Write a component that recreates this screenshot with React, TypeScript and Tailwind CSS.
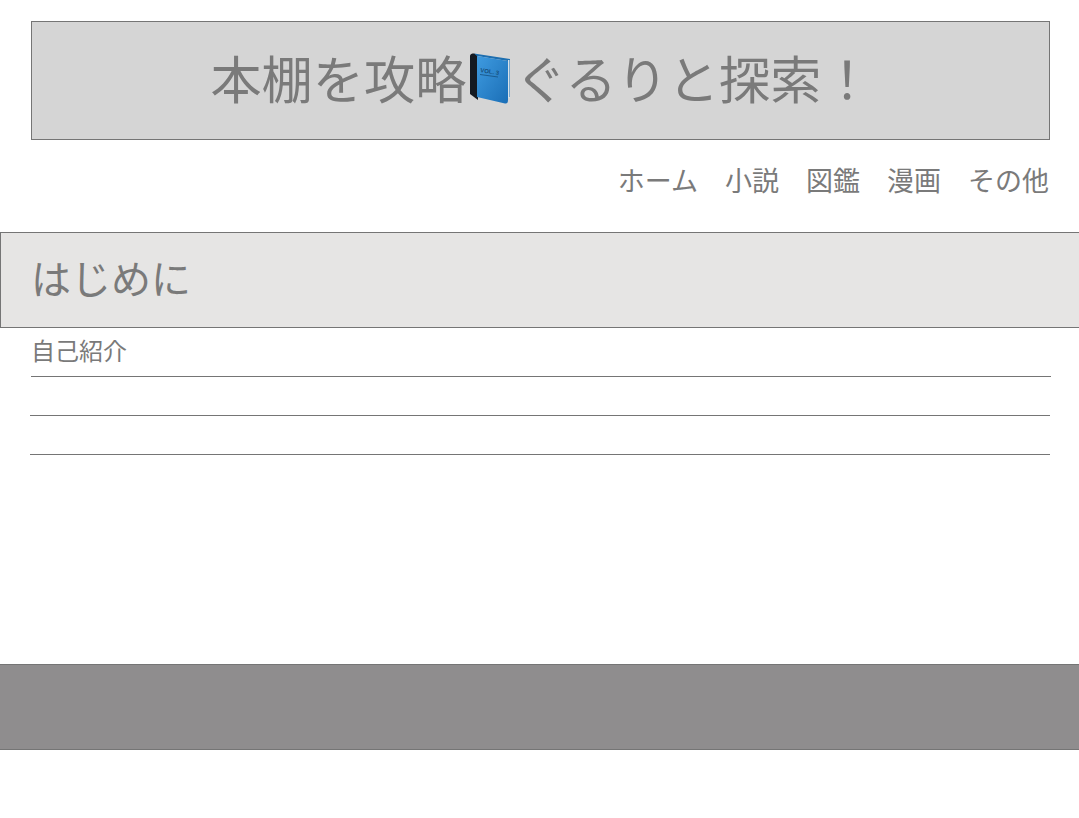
const jp = { fontFamily: '"Noto Sans CJK JP", "Noto Sans", sans-serif' };

function BookIcon() {
  return (
    <svg viewBox="0 0 51 52" className="inline-block w-[51px] h-[52px] shrink-0 relative top-[1px] left-[2px]">
      <defs>
        <linearGradient id="cover" x1="0" y1="0" x2="1" y2="1">
          <stop offset="0" stopColor="#3f9be0" />
          <stop offset="1" stopColor="#1a6eb6" />
        </linearGradient>
      </defs>
      <g transform="translate(3 0)">
        <path d="M1 3 C1 1 3 0.5 5 0.5 L9 2 L9 47 L1 41 Z" fill="#141a22" />
        <path d="M5 0.5 L41 6 L41 44 L39 44 L39 8 L8 3 Z" fill="#1e6fb0" />
        <path d="M39 7 L40.5 7 L40.5 45 L39 45 Z" fill="#d9e2e8" />
        <path d="M8 3 L39 8 L39 47 Q39 51 36 50.5 L8 44 Z" fill="url(#cover)" />
        <text
          x="11"
          y="19"
          transform="rotate(9 11 19)"
          fontFamily='"Liberation Sans", sans-serif'
          fontSize="6"
          fontWeight="700"
          fill="#17507f"
        >
          VOL. 3
        </text>
        <path d="M11 21.5 L29 24" stroke="#1b5c90" strokeWidth="1" />
      </g>
    </svg>
  );
}

export default function App() {
  return (
    <div className="min-h-[818px] bg-white text-[#7a7a7a] font-normal overflow-x-hidden" style={jp}>
      <div className="px-[31px] pt-[21px] pr-[29px]">
        <h1 className="h-[119px] flex items-center justify-center border border-[#757575] bg-[#d5d5d5] text-[51.2px] font-normal leading-none">
          <span className="relative -top-[3px] flex items-center">
            <span className="relative left-[2px]">本棚を攻略</span>
            <BookIcon />
            <span>ぐるりと探索！</span>
          </span>
        </h1>
      </div>
      <nav className="mt-[22px] h-[36px] flex justify-end gap-[27px] pr-[30px] text-[27px] leading-[36px]">
        <span>ホーム</span>
        <span>小説</span>
        <span>図鑑</span>
        <span>漫画</span>
        <span>その他</span>
      </nav>
      <h2 className="mt-[34px] h-[96px] flex items-center pl-[30px] border border-r-0 border-[#757575] bg-[#e6e5e4] text-[40px] font-normal leading-none">
        <span className="relative -top-[3px]">はじめに</span>
      </h2>
      <ul className="flex flex-col">
        <li className="ml-[31px] mr-[28px] h-[49px] border-b border-[#757575] text-[24px] leading-[43px]">自己紹介</li>
        <li className="ml-[30px] mr-[29px] h-[39px] border-b border-[#757575]"></li>
        <li className="ml-[30px] mr-[29px] h-[39px] border-b border-[#757575]"></li>
      </ul>
      <footer className="mt-[209px] h-[86px] border-y border-[#757575] bg-[#8f8d8e]"></footer>
    </div>
  );
}
